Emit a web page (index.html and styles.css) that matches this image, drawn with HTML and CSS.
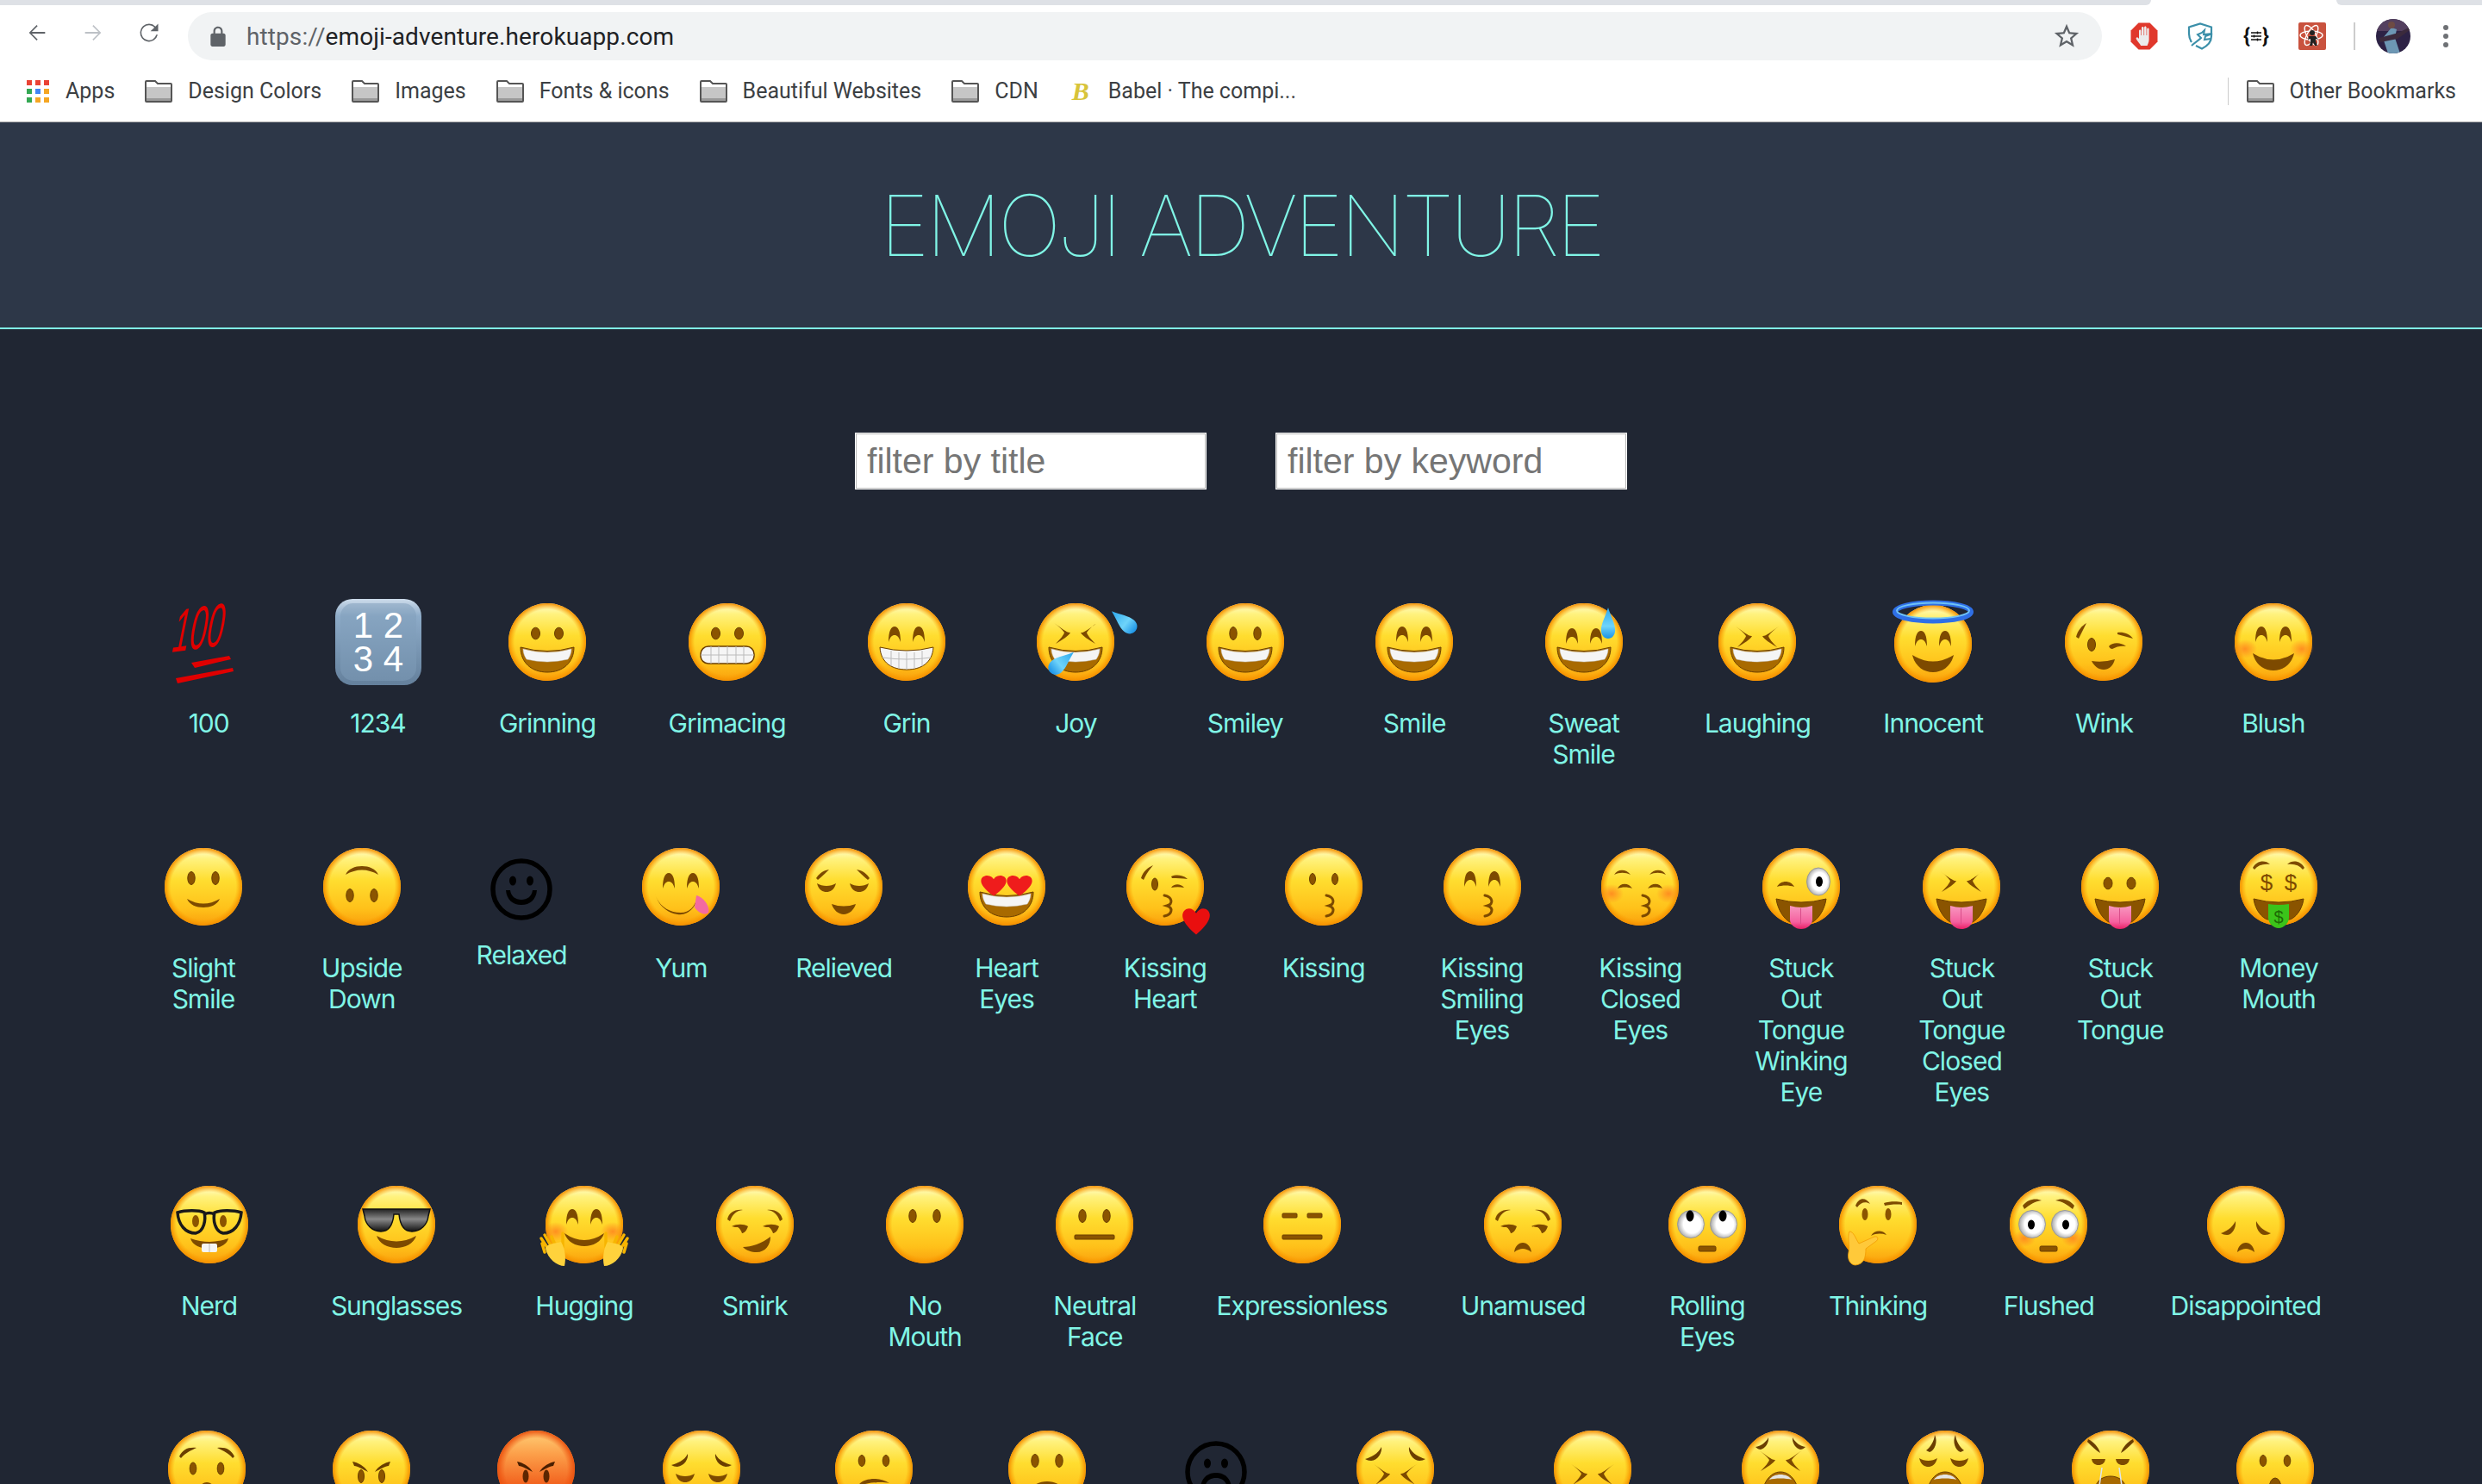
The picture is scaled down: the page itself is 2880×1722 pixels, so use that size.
FILE: index.html
```html
<!DOCTYPE html>
<html>
<head>
  <title>Emoji Adventure</title>
  <link rel="stylesheet" href="styles.css">
</head>
<body>

<!-- shared emoji parts -->
<svg class="defs" xmlns="http://www.w3.org/2000/svg">
  <defs>
    <linearGradient id="gFace" x1="0" y1="0" x2="0" y2="1">
      <stop offset="0" stop-color="#fffdd0"/><stop offset=".14" stop-color="#fff27e"/><stop offset=".42" stop-color="#ffdd2f"/><stop offset=".78" stop-color="#ffc11a"/><stop offset="1" stop-color="#fa9f0c"/>
    </linearGradient>
    <radialGradient id="gRim" cx=".5" cy=".5" r=".5">
      <stop offset=".84" stop-color="#fb9f00" stop-opacity="0"/><stop offset="1" stop-color="#f48f00"/>
    </radialGradient>
    <linearGradient id="gRage" x1="0" y1="0" x2="0" y2="1">
      <stop offset="0" stop-color="#ffd078"/><stop offset=".3" stop-color="#fca04a"/><stop offset=".7" stop-color="#f2621e"/><stop offset="1" stop-color="#e8480f"/>
    </linearGradient>
    <radialGradient id="gRimRage" cx=".5" cy=".5" r=".5">
      <stop offset=".8" stop-color="#f0500f" stop-opacity="0"/><stop offset="1" stop-color="#ea5410"/>
    </radialGradient>
    <radialGradient id="gCheek" cx=".5" cy=".5" r=".5">
      <stop offset="0" stop-color="#ff7a1e" stop-opacity=".75"/><stop offset="1" stop-color="#ff7a1e" stop-opacity="0"/>
    </radialGradient>
    <linearGradient id="gTongue" x1="0" y1="0" x2="0" y2="1">
      <stop offset="0" stop-color="#f898c0"/><stop offset=".7" stop-color="#f5609f"/><stop offset="1" stop-color="#e81e66"/>
    </linearGradient>
    <linearGradient id="gKey" x1="0" y1="0" x2="0" y2="1">
      <stop offset="0" stop-color="#cddceb"/><stop offset=".2" stop-color="#8dabc8"/><stop offset="1" stop-color="#64809c"/>
    </linearGradient>
    <linearGradient id="gDrop" x1="0" y1="0" x2="0" y2="1">
      <stop offset="0" stop-color="#2aa7ee"/><stop offset=".6" stop-color="#6fd4fa"/><stop offset="1" stop-color="#1b92e6"/>
    </linearGradient>
    <linearGradient id="gLens" x1="0" y1="0" x2="0" y2="1">
      <stop offset="0" stop-color="#222"/><stop offset=".45" stop-color="#888"/><stop offset="1" stop-color="#111"/>
    </linearGradient>
    <radialGradient id="gWhite" cx=".55" cy=".5" r=".55">
      <stop offset=".6" stop-color="#fff"/><stop offset="1" stop-color="#a5a5a5"/>
    </radialGradient>

    <g id="face"><circle cx="50" cy="50" r="45" fill="url(#gFace)"/><circle cx="50" cy="50" r="45" fill="url(#gRim)"/></g>
    <g id="faceRage"><circle cx="50" cy="50" r="45" fill="url(#gRage)"/><circle cx="50" cy="50" r="45" fill="url(#gRimRage)"/></g>
    <g id="cheeks"><ellipse cx="17" cy="58" rx="14" ry="11" fill="url(#gCheek)"/><ellipse cx="83" cy="58" rx="14" ry="11" fill="url(#gCheek)"/></g>

    <g id="eyesRound" fill="#8b5400" stroke="#6a3e00"><ellipse cx="36.5" cy="40" rx="5" ry="6.8"/><ellipse cx="63.5" cy="40" rx="5" ry="6.8"/></g>
    <g id="eyesTall" fill="#8b5400" stroke="#6a3e00"><ellipse cx="36" cy="40" rx="4.2" ry="7.5"/><ellipse cx="64" cy="40" rx="4.2" ry="7.5"/></g>
    <g id="eyesHappy" fill="#7d4a00"><path d="M29 50C29 37 32 32 36 32S43 37 43 50C41 44 39 42 36 42S31 44 29 50Z"/><path d="M57 50C57 37 60 32 64 32S71 37 71 50C69 44 67 42 64 42S59 44 57 50Z"/></g>
    <g id="eyesCross" fill="#7d4a00"><path d="M25 32C34 38 41 44 44 43C42 47 35 51 27 56C33 50 36 46 37 43C34 39 30 35 25 32Z"/><path d="M75 32C66 38 59 44 56 43C58 47 65 51 73 56C67 50 64 46 63 43C66 39 70 35 75 32Z"/></g>
    <g id="eyesShut" fill="#7d4a00"><path d="M20 46C26 50 36 50 42 46C40 54 35 56 31 56S22 54 20 46Z"/><path d="M58 46C64 50 74 50 80 46C78 54 73 56 69 56S60 54 58 46Z"/></g>
    <g id="browsUp" fill="#7d4a00"><path d="M18 40C20 32 26 28 36 29C28 30 24 34 21 42Z"/><path d="M82 40C80 32 74 28 64 29C72 30 76 34 79 42Z"/></g>
    <g id="browsSad" fill="#7d4a00"><path d="M19 36C23 30 28 27 34 26C30 30 26 34 21 38Z"/><path d="M81 36C77 30 72 27 66 26C70 30 74 34 79 38Z"/></g>
    <g id="eyesSide" fill="#7d4a00"><path d="M24 52C30 49 38 49 43 52C41 58 38 60 36 60C35 57 33 54 31 53C29 53 27 53 24 52Z"/><path d="M60 52C66 49 74 49 79 52C77 58 74 60 72 60C71 57 69 54 67 53C65 53 63 53 60 52Z"/></g>

    <g id="mouthOpen"><path d="M19 56Q50 65 81 56C81 74 68 85 50 85S19 74 19 56Z" fill="#a86a00" stroke="#6a3e00"/><path d="M22 58Q50 66 78 58C78 63 76 67 74 70Q50 76 26 70C24 67 22 63 22 58Z" fill="#f5f5f5" stroke="#ccc" stroke-width=".5"/></g>
    <g id="mouthDark"><path d="M22 62Q50 70 78 62C78 76 68 92 50 92S22 76 22 62Z" fill="#8a5400" stroke="#6a3e00"/></g>
    <path id="mouthSmile" d="M26 63Q50 78 74 63C71 76 61 83 50 83S29 76 26 63Z" fill="#7d4a00"/>
    <path id="mouthThin" d="M31 64Q50 75 69 64C66 71 58 74 50 74S34 71 31 64Z" fill="#7d4a00"/>
    <path id="mouthSmall" d="M36 70Q50 75 64 70C62 77 56 82 50 82S38 77 36 70Z" fill="#7d4a00"/>
    <path id="mouthFrown" d="M40 82C41 75 45 71 50 71S59 75 60 82C56 79 53 78 50 78S44 79 40 82Z" fill="#7d4a00"/>
    <rect id="mouthLine" x="27" y="62" width="46" height="5" rx="1" fill="#8b5400" stroke="#6a3e00"/>
    <rect id="mouthDot" x="40" y="75" width="20" height="6" rx="1.5" fill="#8b5400" stroke="#6a3e00"/>
    <path id="kiss" d="M50 60C60 62 60 70 53 72C60 74 60 82 50 84" fill="none" stroke="#7d4a00" stroke-width="3" stroke-linecap="round"/>
    <g id="tongue"><path d="M21 64Q50 72 79 64C77 78 69 88 63 91L37 91C31 88 23 78 21 64Z" fill="#8a5400" stroke="#6a3e00"/><path d="M37 72Q50 76 63 72L63 88C63 94 57 99 50 99S37 94 37 88Z" fill="url(#gTongue)"/><path d="M49.5 75V93" stroke="#d94d8a" stroke-width="1"/></g>
    <path id="heart" d="M50 90C20 66 14 50 24 40C32 33 44 36 50 46C56 36 68 33 76 40C86 50 80 66 50 90Z"/>
    <path id="drop" d="M50 0C56 18 64 30 64 42C64 52 58 58 50 58S36 52 36 42C36 30 44 18 50 0Z" fill="url(#gDrop)"/>
    <g id="bigEyes"><ellipse cx="31" cy="49.5" rx="15.5" ry="16" fill="url(#gWhite)" stroke="#999"/><ellipse cx="69" cy="49.5" rx="15.5" ry="16" fill="url(#gWhite)" stroke="#999"/></g>
    <g id="hand"><path d="M4 82L1 72M8 78L0 66M12 76L4 62M17 76L12 64M25 76L25 60" stroke="#f7b500" stroke-width="3.5" stroke-linecap="round"/><path d="M5 78C6 72 16 72 23 70C28 78 29 90 27 98C18 98 8 90 5 78Z" fill="#ffd23c"/></g>
  </defs>
</svg>

<div class="browser">
  <div class="tabstrip">
    <div class="tabstrip-left"></div>
    <div class="tabstrip-tab"></div>
    <div class="tabstrip-right"></div>
  </div>

  <div class="toolbar">
    <svg class="nav-icon" viewBox="0 0 24 24"><path d="M20 11.2H6.8l5.8-5.9-1-1L4 12l7.6 7.7 1-1-5.8-5.9H20z"/></svg>
    <svg class="nav-icon nav-off" viewBox="0 0 24 24"><path d="M4 11.2h13.2l-5.8-5.9 1-1L20 12l-7.6 7.7-1-1 5.8-5.9H4z"/></svg>
    <svg class="nav-icon" viewBox="0 0 24 24"><path d="M18.3 5.7A8.9 8.9 0 0 0 12 3.1 8.9 8.9 0 1 0 20.6 14h-1.5A7.5 7.5 0 1 1 12 4.5c2 0 3.9.9 5.2 2.3L13.4 10.6H21V3z"/></svg>
    <div class="omnibox">
      <svg class="lock" viewBox="0 0 24 24"><path d="M18 9h-1V6.5c0-2.8-2.2-5-5-5s-5 2.200-5 5V9H6c-1.100 0-2 .9-2 2v10c0 1.100.9 2 2 2h12c1.100 0 2-.9 2-2V11c0-1.100-.9-2-2-2zM9 6.500c0-1.700 1.300-3 3-3s3 1.300 3 3V9H9V6.500z"/></svg>
      <span class="url"><span class="url-scheme">https://</span>emoji-adventure.herokuapp.com</span>
      <svg class="star" viewBox="0 0 24 24"><path d="M22 9.240l-7.190-.62L12 2 9.190 8.630 2 9.240l5.460 4.730L5.820 21 12 17.270 18.180 21l-1.630-7.030L22 9.240zM12 15.400l-3.760 2.270 1-4.280-3.320-2.880 4.380-.38L12 6.100l1.710 4.040 4.380.38-3.320 2.880 1 4.280L12 15.400z"/></svg>
    </div>
    <div class="extensions">
      <svg class="ext" viewBox="0 0 32 32"><path d="M9.500 0.500h13l9 9v13l-9 9h-13l-9-9v-13z" fill="#e0382c"/><path d="M10 19V10c0-2 2.400-2 2.400 0v5h.6V6.500c0-2 2.500-2 2.500 0V15h.6V6c0-2 2.500-2 2.500 0v9h.6V8c0-2 2.400-2 2.400 0v12c0 1.500-.3 3-1 4.500l-1 2.500h-7.500c-1-2-3.600-5-5.200-7.500-1-1.800 1-3 2.200-1.600z" fill="#ececec"/></svg>
      <svg class="ext" viewBox="0 0 32 32" fill="none" stroke="#3b8fa9" stroke-width="2.200"><path d="M3 13V5.500L16 1.500l13 4V16c0 7-6 12-11 14.500L11 27"/><path d="M3 13c0 4 1 7 3 10"/><path d="M6 27C10 23 14 21 17 18L13 14l5-2 3-3-1 5 10-1-8 3-1 4 7-1" stroke-width="2"/></svg>
      <div class="ext ext-json">{<svg class="ext-json-lines" viewBox="0 0 12 12"><path d="M0 2h12M0 6h12M0 10h12" stroke="#111" stroke-width="1.400"/><path d="M7.500 0.500v3M3.500 4.500v3M7.500 8.500v3" stroke="#111" stroke-width="1.400"/></svg>}</div>
      <svg class="ext" viewBox="0 0 32 32"><rect width="32" height="32" rx="2" fill="#c9523e"/><g fill="none" stroke="#fff" stroke-width="1.400"><ellipse cx="15" cy="15" rx="13" ry="5"/><ellipse cx="15" cy="15" rx="13" ry="5" transform="rotate(60 15 15)"/><ellipse cx="15" cy="15" rx="13" ry="5" transform="rotate(120 15 15)"/></g><circle cx="16" cy="12" r="3" fill="#222"/><path d="M12 16h8l3 4-3-1v3l2 5h-3l-2-4-1 4h-3l1-5v-3l-3 1z" fill="#222"/></svg>
      <div class="toolbar-divider"></div>
      <svg class="avatar" viewBox="0 0 40 40"><defs><clipPath id="clipAvatar"><circle cx="20" cy="20" r="20"/></clipPath></defs><g clip-path="url(#clipAvatar)"><rect width="40" height="40" fill="#2d2245"/><rect width="40" height="14" fill="#54405f"/><path d="M8 22L18 10l6 2-2 10 6 18H14z" fill="#6d97b4"/><circle cx="18" cy="7" r="4" fill="#6e4b44"/><path d="M4 22l22-6 12-6 1 3-14 10-20 4z" fill="#3b2a3c"/></g></svg>
      <svg class="menu-dots" viewBox="0 0 8 28"><circle cx="4" cy="4" r="3"/><circle cx="4" cy="14" r="3"/><circle cx="4" cy="24" r="3"/></svg>
    </div>
  </div>

  <div class="bookmarks">
    <a class="bookmark">
      <svg class="apps-icon" viewBox="0 0 26 26"><rect width="6" height="6" fill="#ea4335"/><rect x="10" width="6" height="6" fill="#ea4335"/><rect x="20" width="6" height="6" fill="#ea4335"/><rect y="10" width="6" height="6" fill="#34a853"/><rect x="10" y="10" width="6" height="6" fill="#4285f4"/><rect x="20" y="10" width="6" height="6" fill="#f5a623"/><rect y="20" width="6" height="6" fill="#34a853"/><rect x="10" y="20" width="6" height="6" fill="#f5a623"/><rect x="20" y="20" width="6" height="6" fill="#f5a623"/></svg>
      Apps
    </a>
    <a class="bookmark"><svg class="folder" viewBox="0 0 32 26"><use href="#folderShape"/></svg>Design Colors</a>
    <a class="bookmark"><svg class="folder" viewBox="0 0 32 26"><use href="#folderShape"/></svg>Images</a>
    <a class="bookmark"><svg class="folder" viewBox="0 0 32 26"><use href="#folderShape"/></svg>Fonts &amp; icons</a>
    <a class="bookmark"><svg class="folder" viewBox="0 0 32 26"><use href="#folderShape"/></svg>Beautiful Websites</a>
    <a class="bookmark"><svg class="folder" viewBox="0 0 32 26"><use href="#folderShape"/></svg>CDN</a>
    <a class="bookmark"><span class="babel-icon">B</span>Babel · The compi...</a>
    <div class="bookmarks-end">
      <a class="bookmark"><svg class="folder" viewBox="0 0 32 26"><g id="folderShape"><path d="M2 1h10l3 3h15a1 1 0 0 1 1 1v19a1 1 0 0 1-1 1H2a1 1 0 0 1-1-1V2a1 1 0 0 1 1-1z" fill="#fff" stroke="#555" stroke-width="2"/><rect x="2" y="8" width="28" height="13" fill="#c6c6c6"/><rect x="2" y="21" width="28" height="3" fill="#9a9a9a"/></g></svg>Other Bookmarks</a>
    </div>
  </div>
</div>

<header class="site-header">
  <h1>EMOJI ADVENTURE</h1>
</header>

<div class="filters">
  <input type="text" placeholder="filter by title">
  <input type="text" placeholder="filter by keyword">
</div>

<main class="emoji-list">

  <div class="emoji-row">
    <div class="tile"><svg class="emoji" viewBox="0 0 100 100"><g fill="#e00000"><text class="hundred" transform="translate(7 62) rotate(-8) skewX(-14) scale(.78 1.5)">100</text><path d="M30 74L74 66L76 70L34 80Z"/><path d="M12 92L78 80L79 84L14 98Z"/></g></svg><p class="label">100</p></div>
    <div class="tile"><svg class="emoji" viewBox="0 0 100 100"><rect width="100" height="100" rx="20" fill="url(#gKey)"/><rect x="6" y="5" width="88" height="90" rx="15" fill="#7f9dba" opacity=".5"/><text class="keycap" x="50" y="45">1 2</text><text class="keycap" x="50" y="84">3 4</text></svg><p class="label">1234</p></div>
    <div class="tile"><svg class="emoji" viewBox="0 0 100 100"><use href="#face"/><use href="#eyesRound"/><use href="#mouthOpen"/></svg><p class="label">Grinning</p></div>
    <div class="tile"><svg class="emoji" viewBox="0 0 100 100"><use href="#face"/><use href="#eyesRound"/><rect x="19" y="55" width="62" height="20" rx="9" fill="#f5f5f5" stroke="#6a3e00" stroke-width="1.500"/><path d="M19 65H81M31 55V75M40 55V75M50 55V75M60 55V75M69 55V75" stroke="#bbb" stroke-width="1"/></svg><p class="label">Grimacing</p></div>
    <div class="tile"><svg class="emoji" viewBox="0 0 100 100"><use href="#face"/><use href="#eyesHappy"/><path d="M19 56Q50 64 81 56C80 74 67 82 50 82S20 74 19 56Z" fill="#f5f5f5" stroke="#6a3e00"/><path d="M22 68Q50 72 78 68M32 60V78M41 62V81M50 62V82M59 62V81M68 60V78" stroke="#bbb" stroke-width="1" fill="none"/></svg><p class="label">Grin</p></div>
    <div class="tile"><svg class="emoji" viewBox="0 0 100 100"><use href="#face"/><use href="#eyesCross" transform="translate(0 -4)"/><use href="#mouthOpen"/><use href="#drop" transform="translate(28 38) rotate(50) scale(.62)"/><use href="#drop" transform="translate(72 38) rotate(-50) scale(.62)"/></svg><p class="label">Joy</p></div>
    <div class="tile"><svg class="emoji" viewBox="0 0 100 100"><use href="#face"/><use href="#eyesTall"/><use href="#mouthOpen"/></svg><p class="label">Smiley</p></div>
    <div class="tile"><svg class="emoji" viewBox="0 0 100 100"><use href="#face"/><use href="#eyesHappy"/><use href="#mouthOpen"/></svg><p class="label">Smile</p></div>
    <div class="tile"><svg class="emoji" viewBox="0 0 100 100"><use href="#face"/><use href="#eyesHappy" transform="translate(0 2)"/><use href="#mouthOpen"/><use href="#drop" transform="translate(49 10) scale(.58 .62)"/></svg><p class="label">Sweat Smile</p></div>
    <div class="tile"><svg class="emoji" viewBox="0 0 100 100"><use href="#face"/><use href="#eyesCross"/><use href="#mouthOpen"/></svg><p class="label">Laughing</p></div>
    <div class="tile"><svg class="emoji" viewBox="0 0 100 100"><g transform="translate(0 2)"><use href="#face"/><use href="#eyesHappy" transform="translate(0 3)"/><use href="#mouthSmile"/></g><ellipse cx="50" cy="15" rx="44" ry="10.500" fill="none" stroke="#2f6fe6" stroke-width="6"/><ellipse cx="50" cy="13.500" rx="42" ry="9" fill="none" stroke="#6fc3f5" stroke-width="2"/></svg><p class="label">Innocent</p></div>
    <div class="tile"><svg class="emoji" viewBox="0 0 100 100"><use href="#face"/><path d="M18 44C20 36 25 31 30 28C27 34 24 40 21 46Z" fill="#7d4a00"/><ellipse cx="36" cy="53" rx="4.500" ry="7.500" fill="#8b5400" stroke="#6a3e00"/><path d="M66 39C72 38 80 40 84 46C78 44 72 43 66 41Z" fill="#7d4a00"/><path d="M56 55C60 50 70 50 76 55C71 54 65 55 60 58C58 58 57 57 56 55Z" fill="#7d4a00"/><path d="M36 72Q50 74 63 70C61 78 56 82 50 82S39 78 36 72Z" fill="#7d4a00"/></svg><p class="label">Wink</p></div>
    <div class="tile"><svg class="emoji" viewBox="0 0 100 100"><use href="#face"/><use href="#cheeks"/><use href="#eyesHappy"/><use href="#mouthSmile"/></svg><p class="label">Blush</p></div>
  </div>

  <div class="emoji-row emoji-row-tight">
    <div class="tile"><svg class="emoji" viewBox="0 0 100 100"><use href="#face"/><use href="#eyesTall"/><use href="#mouthThin"/></svg><p class="label">Slight Smile</p></div>
    <div class="tile"><svg class="emoji" viewBox="0 0 100 100"><g transform="rotate(180 50 50)"><use href="#eyesTall"/></g><use href="#face"/><g transform="rotate(180 50 50)"><use href="#eyesTall"/><use href="#mouthThin"/></g></svg><p class="label">Upside Down</p></div>
    <div class="tile"><svg class="emoji emoji-text" viewBox="0 0 100 85"><circle cx="50" cy="53" r="33" fill="none" stroke="#000" stroke-width="5.500"/><ellipse cx="40" cy="43" rx="4" ry="5.500"/><ellipse cx="60" cy="43" rx="4" ry="5.500"/><path d="M32 54C33 65 40 71 50 71S67 65 68 54L63 54C62 61 57 65 50 65S38 61 37 54Z"/></svg><p class="label">Relaxed</p></div>
    <div class="tile"><svg class="emoji" viewBox="0 0 100 100"><use href="#face"/><use href="#eyesHappy" transform="translate(0 2)"/><path d="M20 58C24 72 36 80 50 80C60 80 66 74 70 60C68 72 60 84 46 82C34 80 24 72 20 58Z" fill="#7d4a00"/><path d="M68 60C76 62 84 72 82 80C78 84 70 80 66 74Z" fill="#f36aa0"/></svg><p class="label">Yum</p></div>
    <div class="tile"><svg class="emoji" viewBox="0 0 100 100"><use href="#face"/><use href="#browsSad" transform="translate(-1 4)"/><use href="#eyesShut" transform="translate(-1 0)"/><use href="#mouthSmall"/></svg><p class="label">Relieved</p></div>
    <div class="tile"><svg class="emoji" viewBox="0 0 100 100"><use href="#face"/><use href="#mouthOpen"/><use href="#heart" fill="#ef1c1c" transform="translate(11 21) scale(.48 .44)"/><use href="#heart" fill="#ef1c1c" transform="translate(41 21) scale(.48 .44)"/></svg><p class="label">Heart Eyes</p></div>
    <div class="tile"><svg class="emoji" viewBox="0 0 100 100"><use href="#face"/><path d="M22 40C24 33 29 28 36 25C32 30 28 35 25 42Z" fill="#7d4a00"/><ellipse cx="38" cy="47" rx="3.500" ry="7" fill="#8b5400" stroke="#6a3e00"/><path d="M57 38C64 35 72 37 76 41C70 40 64 40 58 40Z" fill="#7d4a00"/><path d="M57 51C60 46 68 46 72 51C67 50 62 50 57 51Z" fill="#7d4a00"/><use href="#kiss" transform="translate(-1 0)"/><use href="#heart" fill="#e90f0f" transform="translate(60 55) scale(.52 .56)"/></svg><p class="label">Kissing Heart</p></div>
    <div class="tile"><svg class="emoji" viewBox="0 0 100 100"><use href="#face"/><ellipse cx="37" cy="41" rx="3.500" ry="6.500" fill="#8b5400" stroke="#6a3e00"/><ellipse cx="63" cy="41" rx="3.500" ry="6.500" fill="#8b5400" stroke="#6a3e00"/><use href="#kiss" transform="translate(3 0)"/></svg><p class="label">Kissing</p></div>
    <div class="tile"><svg class="emoji" viewBox="0 0 100 100"><use href="#face"/><use href="#eyesHappy"/><use href="#kiss" transform="translate(3 0)"/></svg><p class="label">Kissing Smiling Eyes</p></div>
    <div class="tile"><svg class="emoji" viewBox="0 0 100 100"><use href="#face"/><use href="#cheeks"/><g fill="#7d4a00"><path d="M20 36C24 29 34 29 39 36C33 33 26 33 20 36Z"/><path d="M61 36C66 29 76 29 80 36C74 33 67 33 61 36Z"/><path d="M24 52C27 45 37 45 41 52C36 50 29 50 24 52Z"/><path d="M59 52C63 45 73 45 76 52C71 50 64 50 59 52Z"/></g><use href="#kiss" transform="translate(3 0)"/></svg><p class="label">Kissing Closed Eyes</p></div>
    <div class="tile"><svg class="emoji" viewBox="0 0 100 100"><use href="#face"/><path d="M22 50C26 42 38 42 42 50C36 48 28 48 22 50Z" fill="#7d4a00"/><ellipse cx="70" cy="44" rx="13.500" ry="16" fill="url(#gWhite)" stroke="#999"/><ellipse cx="71" cy="44" rx="4" ry="6" fill="#000"/><use href="#tongue"/></svg><p class="label">Stuck Out Tongue Winking Eye</p></div>
    <div class="tile"><svg class="emoji" viewBox="0 0 100 100"><use href="#face"/><use href="#eyesCross"/><use href="#tongue"/></svg><p class="label">Stuck Out Tongue Closed Eyes</p></div>
    <div class="tile"><svg class="emoji" viewBox="0 0 100 100"><use href="#face"/><use href="#eyesRound" transform="translate(-.5 6)"/><use href="#tongue"/></svg><p class="label">Stuck Out Tongue</p></div>
    <div class="tile"><svg class="emoji" viewBox="0 0 100 100"><use href="#face"/><g fill="#7d4a00"><path d="M20 28C24 20 34 18 40 24C32 23 26 25 22 30Z"/><path d="M80 28C76 20 66 18 60 24C68 23 74 25 78 30Z"/></g><text class="dollar" x="36" y="54">$</text><text class="dollar" x="64" y="54">$</text><path d="M21 64Q50 72 79 64C77 78 69 86 63 88L37 88C31 86 23 78 21 64Z" fill="#8a5400" stroke="#6a3e00"/><path d="M38 70Q50 72 62 70V86C62 92 56 98 50 98S38 92 38 86Z" fill="#3bc41a"/><text class="dollar dollar-small" x="50" y="92">$</text></svg><p class="label">Money Mouth</p></div>
  </div>

  <div class="emoji-row">
    <div class="tile"><svg class="emoji" viewBox="0 0 100 100"><use href="#face"/><ellipse cx="34" cy="46" rx="4" ry="7" fill="#8b5400"/><ellipse cx="66" cy="46" rx="4" ry="7" fill="#8b5400"/><g fill="none" stroke="#1a1a1a" stroke-width="3.500"><path d="M13 36C22 33 38 33 44 36C46 44 44 58 34 60C22 60 14 50 13 36Z"/><path d="M87 36C78 33 62 33 56 36C54 44 56 58 66 60C78 60 86 50 87 36Z"/><path d="M44 38Q50 35 56 38"/></g><path d="M28 66Q50 74 72 66C70 74 60 78 50 78S30 74 28 66Z" fill="#7d4a00"/><rect x="41" y="72" width="18" height="10" rx="2" fill="#f5f5f5"/><path d="M50 72V82" stroke="#bbb"/></svg><p class="label">Nerd</p></div>
    <div class="tile"><svg class="emoji" viewBox="0 0 100 100"><use href="#face"/><path d="M11 32H89L87 40C86 50 78 58 68 58C58 58 54 48 53 38H47C46 48 42 58 32 58C22 58 14 50 13 40Z" fill="url(#gLens)" stroke="#111" stroke-width="1.500"/><path d="M27 63Q50 76 73 63C70 72 60 77 50 77S30 72 27 63Z" fill="#7d4a00"/></svg><p class="label">Sunglasses</p></div>
    <div class="tile"><svg class="emoji" viewBox="0 0 100 100"><use href="#face"/><use href="#cheeks"/><use href="#eyesHappy"/><path d="M27 60Q50 76 73 60C70 70 60 75 50 75S30 70 27 60Z" fill="#7d4a00"/><use href="#hand" transform="translate(0 0)"/><use href="#hand" transform="matrix(-1 0 0 1 100 0)"/></svg><p class="label">Hugging</p></div>
    <div class="tile"><svg class="emoji" viewBox="0 0 100 100"><use href="#face"/><use href="#browsUp" transform="translate(0 4)"/><use href="#eyesSide" transform="translate(-1 0)"/><path d="M36 76C46 76 58 72 68 64C68 74 62 82 52 82C46 82 40 80 36 76Z" fill="#7d4a00"/></svg><p class="label">Smirk</p></div>
    <div class="tile"><svg class="emoji" viewBox="0 0 100 100"><use href="#face"/><use href="#eyesTall"/></svg><p class="label">No Mouth</p></div>
    <div class="tile"><svg class="emoji" viewBox="0 0 100 100"><use href="#face"/><use href="#eyesTall"/><use href="#mouthLine"/></svg><p class="label">Neutral Face</p></div>
    <div class="tile"><svg class="emoji" viewBox="0 0 100 100"><use href="#face"/><rect x="27" y="37" width="17" height="5" rx="1" fill="#8b5400" stroke="#6a3e00"/><rect x="56" y="37" width="17" height="5" rx="1" fill="#8b5400" stroke="#6a3e00"/><use href="#mouthLine"/></svg><p class="label">Expressionless</p></div>
    <div class="tile"><svg class="emoji" viewBox="0 0 100 100"><use href="#face"/><use href="#browsUp" transform="translate(0 4)"/><use href="#eyesSide"/><use href="#mouthFrown"/></svg><p class="label">Unamused</p></div>
    <div class="tile"><svg class="emoji" viewBox="0 0 100 100"><use href="#face"/><use href="#bigEyes"/><ellipse cx="30" cy="40" rx="4.500" ry="6.500"/><ellipse cx="68" cy="40" rx="4.500" ry="6.500"/><use href="#mouthDot"/></svg><p class="label">Rolling Eyes</p></div>
    <div class="tile"><svg class="emoji" viewBox="0 0 100 100"><use href="#face"/><path d="M24 28C28 18 36 18 41 26C36 23 30 24 26 30Z" fill="#7d4a00"/><path d="M57 25C63 23 72 23 78 24V27C72 26 63 27 58 28Z" fill="#7d4a00"/><ellipse cx="35" cy="38" rx="3.500" ry="7" fill="#8b5400"/><ellipse cx="62" cy="38" rx="3.500" ry="7" fill="#8b5400"/><path d="M42 63C46 56 56 56 60 62C54 60 48 60 42 63Z" fill="#7d4a00"/><path d="M17 58C22 58 24 66 28 72L46 64C51 63 51 68 47 70L36 78C36 88 34 96 24 97C18 97 14 90 16 82C18 74 14 64 17 58Z" fill="#ffc93a" stroke="#f39c00" stroke-width=".8"/></svg><p class="label">Thinking</p></div>
    <div class="tile"><svg class="emoji" viewBox="0 0 100 100"><use href="#face"/><ellipse cx="22" cy="66" rx="13" ry="10" fill="url(#gCheek)"/><ellipse cx="78" cy="66" rx="13" ry="10" fill="url(#gCheek)"/><path d="M20 28C26 20 36 19 42 22C34 23 28 27 22 32Z" fill="#7d4a00"/><path d="M80 28C74 20 64 19 58 22C66 23 72 27 78 32Z" fill="#7d4a00"/><use href="#bigEyes"/><ellipse cx="30" cy="50" rx="4" ry="5.500"/><ellipse cx="70" cy="50" rx="4" ry="5.500"/><use href="#mouthDot"/></svg><p class="label">Flushed</p></div>
    <div class="tile"><svg class="emoji" viewBox="0 0 100 100"><use href="#face"/><g fill="#7d4a00"><path d="M21 60C27 58 34 54 38 46C39 54 34 62 28 62C25 62 23 61 21 60Z"/><path d="M79 60C73 58 66 54 62 46C61 54 66 62 72 62C75 62 77 61 79 60Z"/></g><use href="#mouthFrown"/></svg><p class="label">Disappointed</p></div>
  </div>

  <div class="emoji-row">
    <div class="tile"><svg class="emoji" viewBox="0 0 100 100"><use href="#face"/><g fill="#6a3e00"><path d="M18 35C22 27 28 24 38 25C32 28 26 30 20 37Z"/><path d="M82 35C78 27 72 24 62 25C68 28 74 30 80 37Z"/></g><ellipse cx="34" cy="49" rx="3.800" ry="7" fill="#8b5400" stroke="#6a3e00"/><ellipse cx="66" cy="49" rx="3.800" ry="7" fill="#8b5400" stroke="#6a3e00"/><use href="#mouthFrown" transform="translate(0 -6)"/></svg><p class="label">Worried</p></div>
    <div class="tile"><svg class="emoji" viewBox="0 0 100 100"><use href="#face"/><g fill="#6a3e00"><path d="M28 41C34 42 42 46 46 53C40 50 34 46 30 46Z"/><path d="M72 41C66 42 58 46 54 53C60 50 66 46 70 46Z"/></g><ellipse cx="38" cy="58" rx="3.500" ry="7.500" fill="#8b5400" stroke="#6a3e00"/><ellipse cx="62" cy="58" rx="3.500" ry="7.500" fill="#8b5400" stroke="#6a3e00"/><use href="#mouthFrown"/></svg><p class="label">Angry</p></div>
    <div class="tile"><svg class="emoji" viewBox="0 0 100 100"><use href="#faceRage"/><g fill="#4a1f00"><path d="M28 41C34 42 42 46 46 53C40 50 34 46 30 46Z"/><path d="M72 41C66 42 58 46 54 53C60 50 66 46 70 46Z"/></g><ellipse cx="38" cy="58" rx="3.500" ry="7.500" fill="#5d2600"/><ellipse cx="62" cy="58" rx="3.500" ry="7.500" fill="#5d2600"/><use href="#mouthFrown"/></svg><p class="label">Rage</p></div>
    <div class="tile"><svg class="emoji" viewBox="0 0 100 100"><use href="#face"/><g fill="#6a3e00"><path d="M15 45C22 43 30 40 34 32C35 38 30 46 22 47C19 47 17 46 15 45Z"/><path d="M85 45C78 43 70 40 66 32C65 38 70 46 78 47C81 47 83 46 85 45Z"/></g><use href="#eyesShut" transform="translate(0 9)"/><use href="#mouthSmall"/></svg><p class="label">Pensive</p></div>
    <div class="tile"><svg class="emoji" viewBox="0 0 100 100"><use href="#face"/><ellipse cx="36" cy="40" rx="3.800" ry="6.500" fill="#8b5400" stroke="#6a3e00"/><ellipse cx="64" cy="40" rx="3.800" ry="6.500" fill="#8b5400" stroke="#6a3e00"/><path d="M31 70C36 60 56 58 68 66C58 64 42 65 31 70Z" fill="#7d4a00"/></svg><p class="label">Confused</p></div>
    <div class="tile"><svg class="emoji" viewBox="0 0 100 100"><use href="#face"/><use href="#eyesTall"/><use href="#mouthThin" transform="rotate(180 50 69)"/></svg><p class="label">Slight Frown</p></div>
    <div class="tile"><svg class="emoji emoji-text" viewBox="0 0 100 85"><circle cx="50" cy="53" r="33" fill="none" stroke="#000" stroke-width="5.500"/><ellipse cx="40" cy="43" rx="4" ry="5.500"/><ellipse cx="60" cy="43" rx="4" ry="5.500"/><path d="M32 71C33 60 40 54 50 54S67 60 68 71L63 71C62 64 57 60 50 60S38 64 37 71Z"/></svg><p class="label">Frowning</p></div>
    <div class="tile"><svg class="emoji" viewBox="0 0 100 100"><use href="#face"/><g fill="#6a3e00"><path d="M15 38C22 36 30 32 34 24C35 30 30 40 22 40C19 40 17 39 15 38Z"/><path d="M85 38C78 36 70 32 66 24C65 30 70 40 78 40C81 40 83 39 85 38Z"/></g><use href="#eyesCross" transform="translate(0 12)"/><use href="#mouthFrown" transform="translate(0 1)"/></svg><p class="label">Persevere</p></div>
    <div class="tile"><svg class="emoji" viewBox="0 0 100 100"><use href="#face"/><use href="#eyesCross" transform="translate(0 12)"/><use href="#mouthFrown" transform="translate(0 1)"/></svg><p class="label">Confounded</p></div>
    <div class="tile"><svg class="emoji" viewBox="0 0 100 100"><use href="#face"/><g fill="#6a3e00"><path d="M21 24C27 23 33 19 36 13C37 19 32 26 27 27C25 27 23 26 21 24Z"/><path d="M79 24C73 23 67 19 64 13C63 19 68 26 73 27C75 27 77 26 79 24Z"/></g><use href="#eyesCross" transform="translate(0 -4)"/><path d="M28 86C28 66 38 53 50 53S72 66 72 86Z" fill="#a86a00" stroke="#6a3e00"/><path d="M37 62C42 54 58 54 63 62C57 60 43 60 37 62Z" fill="#e5e5e5"/></svg><p class="label">Tired Face</p></div>
    <div class="tile"><svg class="emoji" viewBox="0 0 100 100"><use href="#face"/><g fill="#6a3e00"><path d="M28 28C33 24 37 18 38 10C42 18 38 28 32 30Z"/><path d="M72 28C67 24 63 18 62 10C58 18 62 28 68 30Z"/></g><use href="#eyesShut" transform="translate(1 -9) scale(.95 1)"/><path d="M28 86C28 66 38 53 50 53S72 66 72 86Z" fill="#a86a00" stroke="#6a3e00"/><path d="M37 62C42 54 58 54 63 62C57 60 43 60 37 62Z" fill="#e5e5e5"/></svg><p class="label">Weary</p></div>
    <div class="tile"><svg class="emoji" viewBox="0 0 100 100"><use href="#face"/><g fill="#6a3e00"><path d="M24 15C30 18 36 24 38 31C33 28 28 23 23 18Z"/><path d="M76 15C70 18 64 24 62 31C67 28 72 23 77 18Z"/></g><g fill="#7d4a00"><path d="M28 38H44C43 44 39 45 36 45S29 44 28 38Z"/><path d="M56 38H72C71 44 67 45 64 45S57 44 56 38Z"/></g><path d="M32 72C34 62 42 58 50 58S66 62 68 72Z" fill="#a86a00" stroke="#6a3e00"/><path d="M40 48L36 76M60 48L64 76" stroke="#dde6ef" stroke-width="1.500"/></svg><p class="label">Triumph</p></div>
    <div class="tile"><svg class="emoji" viewBox="0 0 100 100"><use href="#face"/><ellipse cx="36" cy="40" rx="3.800" ry="6.500" fill="#8b5400" stroke="#6a3e00"/><ellipse cx="64" cy="40" rx="3.800" ry="6.500" fill="#8b5400" stroke="#6a3e00"/><ellipse cx="50" cy="72" rx="7" ry="12" fill="#8a5400" stroke="#6a3e00"/></svg><p class="label">Open Mouth</p></div>
  </div>

</main>

</body>
</html>
```

FILE: styles.css
```css
html, body { margin: 0; height: 100%; overflow: hidden; }
body { background-color: #202633; font-family: "Inter", sans-serif; }
.defs { position: absolute; width: 0; height: 0; }

/* browser chrome */
.browser { background-color: #fff; border-bottom: 1px solid #a9a9a9; font-family: "Roboto", sans-serif; }
.tabstrip { display: flex; height: 6px; }
.tabstrip-left { flex: 0 0 2496px; background-color: #dee1e6; border-bottom-right-radius: 8px; }
.tabstrip-tab { flex: 1 1 auto; background-color: #fff; }
.tabstrip-right { flex: 0 0 169px; background-color: #dee1e6; border-bottom-left-radius: 8px; }

.toolbar { display: flex; align-items: center; height: 64px; padding-left: 29px; }
.nav-icon { width: 28px; height: 28px; margin-right: 37px; fill: #5f6368; flex: none; }
.nav-off { fill: #bdc1c6; }
.nav-icon:nth-child(3) { margin-right: 31px; }
.omnibox { display: flex; align-items: center; width: 2221px; height: 56px; margin-top: 8px; margin-top: 8px; background-color: #f1f3f4; border-radius: 28px; padding: 0 24px 0 22px; box-sizing: border-box; position: relative; top: 4px; margin-top: 0; }
.lock { width: 26px; height: 26px; fill: #5f6368; margin-right: 20px; flex: none; }
.url { font-size: 28px; color: #202124; flex: 1; letter-spacing: .1px; }
.url-scheme { color: #5f6368; }
.star { width: 34px; height: 34px; fill: #5f6368; }

.extensions { display: flex; align-items: center; margin-left: 33px; position: relative; top: 4px; }
.ext { width: 32px; height: 32px; margin-right: 33px; flex: none; }
.ext-json { display: flex; align-items: center; justify-content: center; width: 32px; font-size: 24px; font-weight: 700; color: #111; margin-right: 33px; }
.ext-json-lines { width: 12px; height: 12px; margin: 0 1px; }
.toolbar-divider { width: 2px; height: 32px; background-color: #ccc; margin-left: -1px; margin-right: 24px; }
.avatar { width: 40px; height: 40px; margin-right: 37px; flex: none; }
.menu-dots { width: 8px; height: 28px; fill: #6e7175; }

.bookmarks { display: flex; align-items: center; height: 71px; padding-left: 31px; font-size: 25px; color: #3c4043; }
.bookmark { display: flex; align-items: center; margin-right: 35px; white-space: nowrap; }
.apps-icon { width: 26px; height: 26px; margin-right: 19px; }
.folder { width: 32px; height: 26px; margin-right: 18px; }
.babel-icon { width: 28px; margin-right: 18px; font-family: "Liberation Serif", serif; font-style: italic; font-weight: 700; font-size: 30px; color: #d8c43a; text-align: center; }
.bookmarks-end { margin-left: auto; height: 32px; border-left: 1px solid #ccc; padding-left: 21px; display: flex; align-items: center; }
.bookmarks-end .bookmark { margin-right: 30px; }

/* page header */
.site-header { height: 238px; background-color: #2d3748; border-bottom: 2px solid #80f5e6; display: flex; align-items: center; justify-content: center; }
.site-header h1 { margin: 0; font-size: 98px; font-weight: 100; letter-spacing: -4px; color: #80f5e6; }

.filters { display: flex; justify-content: center; gap: 80px; margin-top: 120px; }
.filters input { width: 408px; height: 66px; box-sizing: border-box; padding: 0 0 0 13px; border: 1px solid #fff; box-shadow: inset 0 0 0 1px #b8b8b8; font-family: "Liberation Sans", sans-serif; font-size: 41px; background-color: #fff; }
.filters input::placeholder { color: #757575; opacity: 1; }

/* emoji rows */
.emoji-list { width: 90%; margin: 127px auto 0; }
.emoji-row { display: flex; justify-content: space-around; align-items: flex-start; margin-bottom: 86px; }
.tile { width: min-content; min-width: 112px; text-align: center; }
.emoji-row-tight .tile { min-width: 102px; }
.emoji { display: block; width: 100px; height: 100px; margin: 0 auto; overflow: visible; }
.emoji-text { height: 85px; }
.label { margin: 26px 0 0; font-size: 30px; line-height: 36px; letter-spacing: -1px; color: #80f5e6; }

.hundred { font-family: "Liberation Sans", sans-serif; font-style: italic; font-size: 46px; }
.keycap { font-family: "Liberation Sans", sans-serif; font-size: 42px; fill: #fff; text-anchor: middle; }
.dollar { font-family: "Liberation Sans", sans-serif; font-size: 26px; fill: #7d4a00; text-anchor: middle; }
.dollar-small { font-size: 20px; fill: #1d6b05; }
```
